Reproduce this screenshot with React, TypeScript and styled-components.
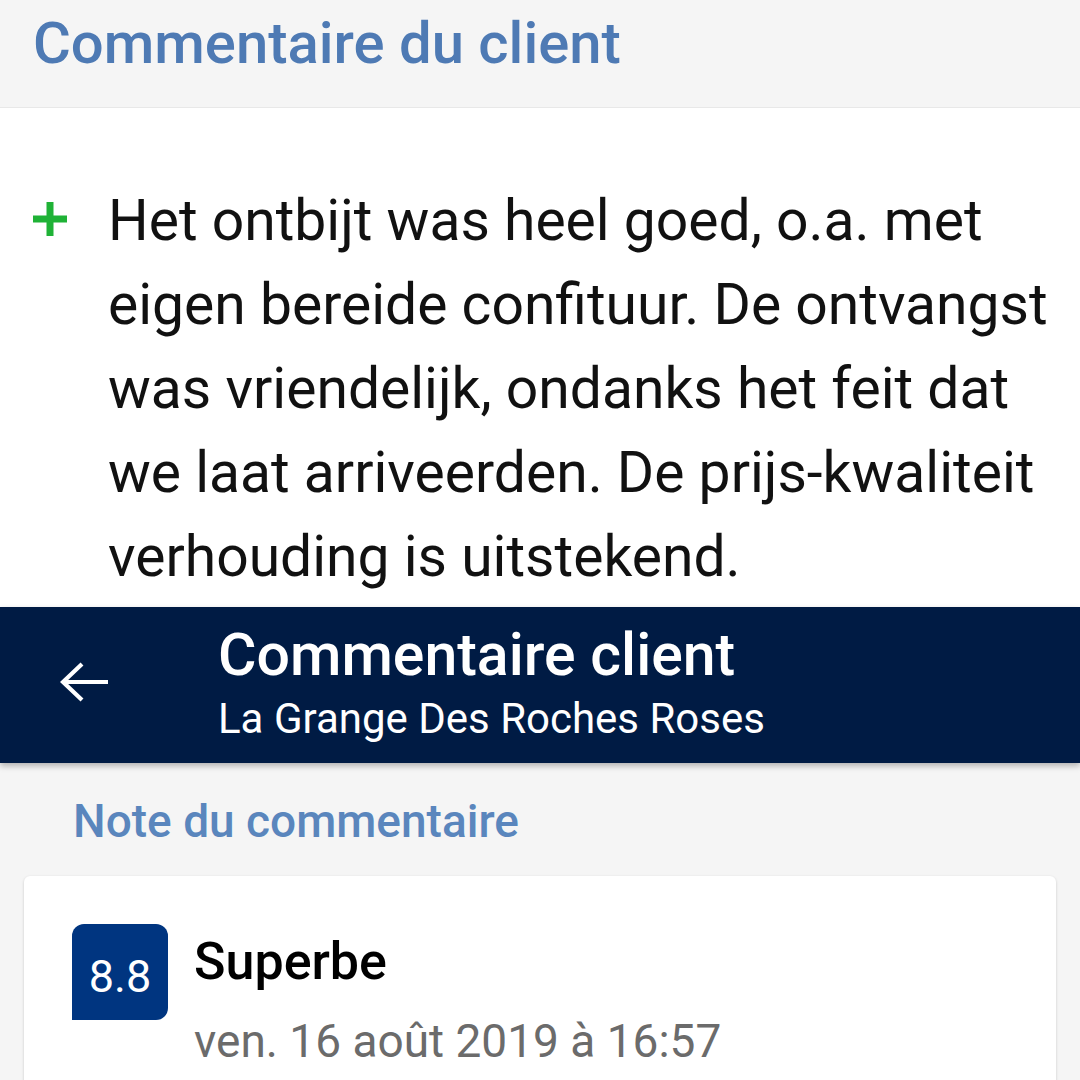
import * as React from 'react';
import styled, { createGlobalStyle } from 'styled-components';

const GlobalStyle = createGlobalStyle`
  html, body {
    margin: 0;
    padding: 0;
    background: #f5f5f5;
    font-family: Roboto, "Noto Sans", sans-serif;
  }
`;

const Page = styled.div`
  width: 1080px;
  height: 1080px;
  overflow: hidden;
  background: #f5f5f5;
  display: flex;
  flex-direction: column;

  & > * {
    flex-shrink: 0;
  }
`;

const SectionHeader = styled.div`
  height: 108px;
  box-sizing: border-box;
  padding: 9px 0 0 33px;
  border-bottom: 1px solid #e8e8e8;
  background: #f5f5f5;
`;

const SectionTitle = styled.h2`
  margin: 0;
  font-size: 58px;
  line-height: 68px;
  font-weight: 500;
  color: #4e7ab4;
`;

const CommentBody = styled.div`
  height: 499px;
  background: #fff;
  box-sizing: border-box;
  padding: 71px 0 0 33px;
  display: flex;
  align-items: flex-start;
`;

const PlusSign = styled.div`
  width: 75px;
  flex-shrink: 0;
  padding-top: 23px;
`;

const CommentText = styled.p`
  margin: 0;
  font-size: 57px;
  line-height: 84px;
  color: #111;
  white-space: nowrap;
`;

const AppBar = styled.header`
  height: 156px;
  box-sizing: border-box;
  padding-top: 15px;
  background: #001b44;
  display: flex;
  align-items: flex-start;
  box-shadow: 0 3px 6px rgba(0, 0, 0, 0.28);
  position: relative;
  z-index: 1;
`;

const BackButton = styled.div`
  width: 218px;
  flex-shrink: 0;
  padding: 40px 0 0 60px;
  box-sizing: border-box;
  display: flex;
`;

const BarTitles = styled.div`
  display: flex;
  flex-direction: column;
  color: #fff;
`;

const BarTitle = styled.div`
  font-size: 59px;
  font-weight: 500;
  line-height: 66px;
`;

const BarSubtitle = styled.div`
  font-size: 42px;
  line-height: 50px;
  margin-top: 6px;
`;

const NoteSection = styled.div`
  padding: 31px 24px 0 24px;
  display: flex;
  flex-direction: column;
`;

const NoteHeading = styled.div`
  padding-left: 49px;
  font-size: 46px;
  font-weight: 500;
  color: #5a86bd;
  line-height: 54px;
`;

const Card = styled.div`
  margin-top: 28px;
  background: #fff;
  border-radius: 6px;
  box-shadow: 0 1px 3px rgba(0, 0, 0, 0.18);
  padding: 48px 48px 40px 48px;
  display: flex;
  align-items: flex-start;
  gap: 26px;
  height: 300px;
  box-sizing: border-box;
`;

const ScoreBadge = styled.div`
  width: 96px;
  height: 96px;
  flex-shrink: 0;
  background: #003580;
  color: #fff;
  border-radius: 12px 12px 12px 0;
  display: flex;
  align-items: center;
  justify-content: center;
  font-size: 45px;
  padding-top: 8px;
  box-sizing: border-box;
`;

const ScoreInfo = styled.div`
  display: flex;
  flex-direction: column;
`;

const ScoreLabel = styled.div`
  font-size: 52px;
  font-weight: 500;
  color: #000;
  line-height: 60px;
  margin-top: 8px;
`;

const ScoreDate = styled.div`
  font-size: 46px;
  color: #6b6b6b;
  line-height: 56px;
  margin-top: 21px;
`;

const lines = [
  'Het ontbijt was heel goed, o.a. met',
  'eigen bereide confituur. De ontvangst',
  'was vriendelijk, ondanks het feit dat',
  'we laat arriveerden. De prijs-kwaliteit',
  'verhouding is uitstekend.',
];

export default function App() {
  return (
    <Page>
      <GlobalStyle />
      <SectionHeader>
        <SectionTitle>Commentaire du client</SectionTitle>
      </SectionHeader>
      <CommentBody>
        <PlusSign>
          <svg width="34" height="34" viewBox="0 0 34 34">
            <rect x="13.5" y="0" width="7" height="34" fill="#1fb236" />
            <rect x="0" y="13.5" width="34" height="7" fill="#1fb236" />
          </svg>
        </PlusSign>
        <CommentText>
          {lines.map((line, i) => (
            <React.Fragment key={i}>
              {line}
              {i < lines.length - 1 && <br />}
            </React.Fragment>
          ))}
        </CommentText>
      </CommentBody>
      <AppBar>
        <BackButton>
          <svg width="48" height="40" viewBox="0 0 48 40" fill="none" stroke="#fff" strokeWidth="4.2">
            <path d="M48 20 H4" />
            <path d="M22 2 L3 20 L22 38" />
          </svg>
        </BackButton>
        <BarTitles>
          <BarTitle>Commentaire client</BarTitle>
          <BarSubtitle>La Grange Des Roches Roses</BarSubtitle>
        </BarTitles>
      </AppBar>
      <NoteSection>
        <NoteHeading>Note du commentaire</NoteHeading>
        <Card>
          <ScoreBadge>8.8</ScoreBadge>
          <ScoreInfo>
            <ScoreLabel>Superbe</ScoreLabel>
            <ScoreDate>ven. 16 août 2019 à 16:57</ScoreDate>
          </ScoreInfo>
        </Card>
      </NoteSection>
    </Page>
  );
}
